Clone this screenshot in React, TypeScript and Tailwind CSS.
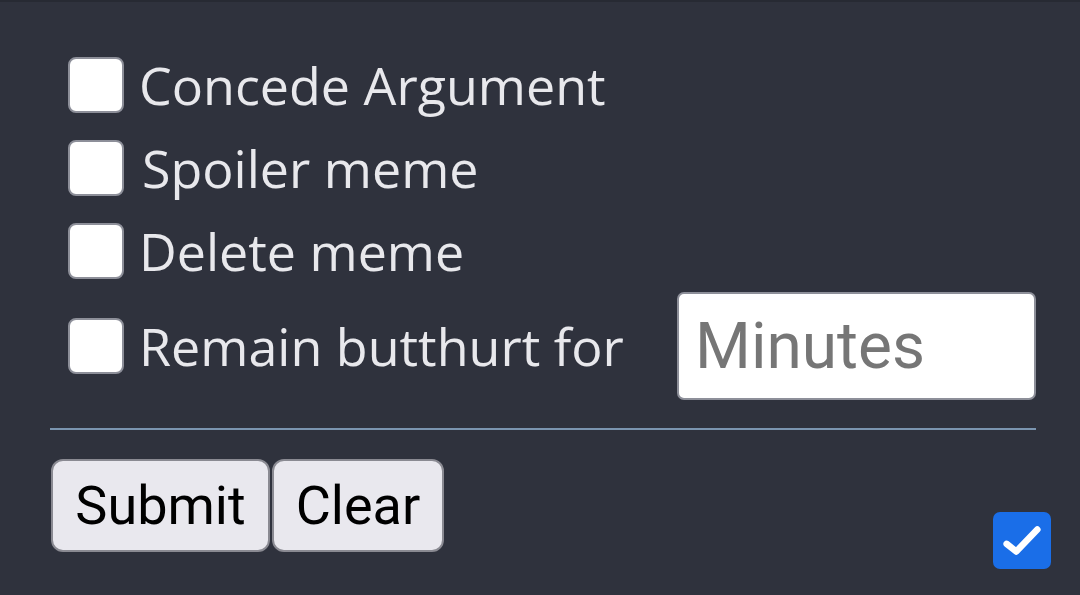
export default function App() {
  const items = [
    { label: 'Concede Argument', gap: 'ml-[15px]' },
    { label: 'Spoiler meme', gap: 'ml-[18px]' },
    { label: 'Delete meme', gap: 'ml-[15px]' },
  ];

  return (
    <div className="w-[1080px] h-[595px] bg-[#2f323d] border-t-2 border-[#272a33] overflow-hidden relative font-['Open_Sans',sans-serif]">
      <div className="pl-[68px] pr-[44px] pt-[41px]">
        {items.map((item) => (
          <div key={item.label} className="flex items-center h-[83px]">
            <span className="w-[56px] h-[56px] rounded-[8px] bg-white border-2 border-[#8d8f99] shrink-0" />
            <span className={`${item.gap} text-[52px] leading-none text-[#e8e8ec]`}>{item.label}</span>
          </div>
        ))}
        <div className="flex items-center h-[108px]">
          <span className="w-[56px] h-[56px] rounded-[8px] bg-white border-2 border-[#8d8f99] shrink-0" />
          <span className="ml-[15px] text-[52px] leading-none text-[#e8e8ec]">Remain butthurt for</span>
          <input
            placeholder="Minutes"
            className="ml-auto w-[359px] h-[108px] bg-white rounded-[7px] border-2 border-[#8d8f99] px-[16px] text-[64px] font-['Roboto',sans-serif] placeholder:text-[#767676] outline-none"
          />
        </div>
      </div>
      <div className="ml-[50px] mr-[44px] mt-[28px] h-[2px] bg-[#7b95b0]" />
      <div className="flex pl-[51px] mt-[29px] gap-[2px] font-['Roboto',sans-serif]">
        <button className="w-[219px] h-[93px] bg-[#e9e8ee] border-2 border-[#8a8a92] rounded-[12px] text-[54px] text-black">
          Submit
        </button>
        <button className="w-[172px] h-[93px] bg-[#e9e8ee] border-2 border-[#8a8a92] rounded-[12px] text-[54px] text-black">
          Clear
        </button>
      </div>
      <div className="absolute left-[993px] top-[510px] w-[58px] h-[57px] rounded-[7px] bg-[#1a6ee8] flex items-center justify-center">
        <svg width="46" height="46" viewBox="0 0 24 24" fill="none" stroke="white" strokeWidth="3.4" strokeLinecap="round" strokeLinejoin="round">
          <path d="M4 13.5l5 4L20 6" />
        </svg>
      </div>
    </div>
  );
}
